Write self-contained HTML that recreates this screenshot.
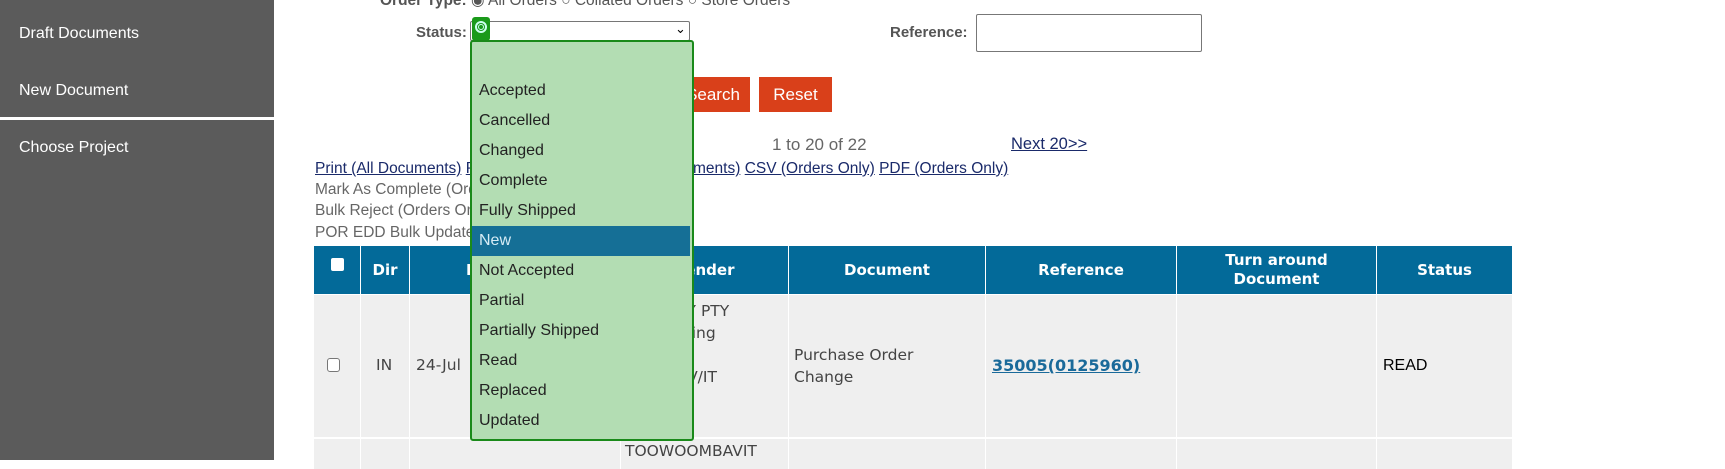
<!DOCTYPE html>
<html><head><style>
*{margin:0;padding:0;box-sizing:border-box}
body{width:1725px;height:460px;overflow:hidden;background:#fff;position:relative;font-family:"Liberation Sans",Arial,sans-serif}
.a{position:absolute;white-space:nowrap}
.side{left:0;top:0;width:274px;height:460px;background:#5b5b5b}
.si{color:#fff;font-size:16px;left:19px}
.g{color:#666;font-size:15.5px}
.lk{color:#1a2a6a;text-decoration:underline;font-size:15.5px}
.h{background:#036a99;color:#fff;font-family:"DejaVu Sans",sans-serif;font-weight:bold;font-size:15px;text-align:center;display:flex;align-items:center;justify-content:center;line-height:19px}
.c{background:#efefef}
.v{font-family:"DejaVu Sans",sans-serif;font-size:15.5px;color:#444}
.dd div{height:30px;line-height:30px;padding-left:7px;font-size:16px;color:#222}
</style></head><body>
<div class="a side"></div>
<div class="a" style="left:0;top:117px;width:274px;height:3px;background:#fff"></div>
<div class="a si" style="top:25px">Draft Documents</div>
<div class="a si" style="top:82px">New Document</div>
<div class="a si" style="top:139px">Choose Project</div>

<div class="a" style="left:380px;top:-9px;font-size:15.5px;color:#555"><b>Order Type:</b> ◉ All Orders ○ Collated Orders ○ Store Orders</div>
<div class="a" style="left:416px;top:24px;font-size:15px;font-weight:bold;color:#555">Status:</div>
<div class="a" style="left:470px;top:21px;width:220px;height:20px;border:1px solid #767676;border-radius:2px;background:#fff"></div>
<div class="a" style="left:675px;top:21px;font-size:13px">&#8964;</div>
<div class="a" style="left:472px;top:17px;width:18px;height:24px;background:#1a9a1a;border-radius:3px"></div>
<div class="a" style="left:475px;top:21px;width:12px;height:12px;border:2px solid #cfe;border-radius:50%"></div>
<div class="a" style="left:478px;top:24px;width:6px;height:6px;border:1px solid #cfe;border-radius:50%"></div>

<div class="a" style="left:890px;top:24px;font-size:15px;font-weight:bold;color:#555">Reference:</div>
<div class="a" style="left:976px;top:14px;width:226px;height:38px;border:1px solid #777;border-radius:2px"></div>

<div class="a" style="left:676px;top:77px;width:74px;height:35px;background:#d9401a;color:#fff;font-size:17px;line-height:35px;text-align:center">Search</div>
<div class="a" style="left:759px;top:77px;width:73px;height:35px;background:#d9401a;color:#fff;font-size:17px;line-height:35px;text-align:center">Reset</div>

<div class="a g" style="left:772px;top:135px;font-size:17px">1 to 20 of 22</div>
<div class="a lk" style="left:1011px;top:135px;font-size:16.5px">Next 20&gt;&gt;</div>
<div class="a" style="left:315px;top:160px;font-size:15.5px;color:#1a2a6a"><span class="lk">Print (All Documents)</span> <span class="lk">Print (Selected Documents)</span> <span class="lk">CSV (Orders Only)</span> <span class="lk">PDF (Orders Only)</span></div>
<div class="a" style="left:693px;top:160px;font-size:15.5px;color:#1a2a6a;background:#fff;padding-right:2px"><span class="lk">ments)</span> <span class="lk">CSV (Orders Only)</span> <span class="lk">PDF (Orders Only)</span></div>
<div class="a g" style="left:315px;top:181px">Mark As Complete (Orders Only)</div>
<div class="a g" style="left:315px;top:202px">Bulk Reject (Orders Only)</div>
<div class="a g" style="left:315px;top:224px">POR EDD Bulk Update</div>

<div class="a h" style="left:314px;top:246px;width:46px;height:48px"><span style="width:13px;height:13px;background:#fff;border-radius:2px;display:inline-block;margin-top:-12px"></span></div>
<div class="a h" style="left:361px;top:246px;width:48px;height:48px">Dir</div>
<div class="a h" style="left:410px;top:246px;width:210px;height:48px;justify-content:flex-start;padding-left:56px">Date</div>
<div class="a h" style="left:621px;top:246px;width:167px;height:48px">Sender</div>
<div class="a h" style="left:789px;top:246px;width:196px;height:48px">Document</div>
<div class="a h" style="left:986px;top:246px;width:190px;height:48px">Reference</div>
<div class="a h" style="left:1177px;top:246px;width:199px;height:48px">Turn around<br>Document</div>
<div class="a h" style="left:1377px;top:246px;width:135px;height:48px">Status</div>

<div class="a c" style="left:314px;top:295px;width:46px;height:142px"></div>
<div class="a c" style="left:361px;top:295px;width:48px;height:142px"></div>
<div class="a c" style="left:410px;top:295px;width:210px;height:142px"></div>
<div class="a c" style="left:621px;top:295px;width:167px;height:142px"></div>
<div class="a c" style="left:789px;top:295px;width:196px;height:142px"></div>
<div class="a c" style="left:986px;top:295px;width:190px;height:142px"></div>
<div class="a c" style="left:1177px;top:295px;width:199px;height:142px"></div>
<div class="a c" style="left:1377px;top:295px;width:135px;height:142px"></div>
<div class="a c" style="left:314px;top:439px;width:46px;height:30px"></div>
<div class="a c" style="left:361px;top:439px;width:48px;height:30px"></div>
<div class="a c" style="left:410px;top:439px;width:210px;height:30px"></div>
<div class="a c" style="left:621px;top:439px;width:167px;height:30px"></div>
<div class="a c" style="left:789px;top:439px;width:196px;height:30px"></div>
<div class="a c" style="left:986px;top:439px;width:190px;height:30px"></div>
<div class="a c" style="left:1177px;top:439px;width:199px;height:30px"></div>
<div class="a c" style="left:1377px;top:439px;width:135px;height:30px"></div>

<div class="a" style="left:327px;top:358px;width:13px;height:14px;border:1px solid #777;border-radius:3px;background:#fff"></div>
<div class="a v" style="left:376px;top:356px">IN</div>
<div class="a v" style="left:416px;top:356px">24-Jul</div>
<div class="a v" style="left:626px;top:300px;line-height:22px">TOOWOY PTY<br>LTD Trading<br>Toowey<br>Heron AV/IT<br>Store<br>Hill</div>
<div class="a v" style="left:794px;top:344px;line-height:22px">Purchase Order<br>Change</div>
<div class="a" style="left:992px;top:356px;font-family:'DejaVu Sans',sans-serif;font-weight:bold;font-size:16px;color:#1a6a9a;text-decoration:underline">35005(0125960)</div>
<div class="a" style="left:1383px;top:357px;font-size:16px;color:#000">READ</div>
<div class="a v" style="left:625px;top:442px">TOOWOOMBAVIT</div>

<div class="a dd" style="left:470px;top:40px;width:224px;height:401px;border:2px solid #1a8a1a;border-radius:3px;background:#b3ddb3;padding-top:4px">
<div></div><div>Accepted</div><div>Cancelled</div><div>Changed</div><div>Complete</div><div>Fully Shipped</div>
<div style="background:#156f96;color:#d6ecf5;margin-right:2px">New</div>
<div>Not Accepted</div><div>Partial</div><div>Partially Shipped</div><div>Read</div><div>Replaced</div><div>Updated</div>
</div>
</body></html>
